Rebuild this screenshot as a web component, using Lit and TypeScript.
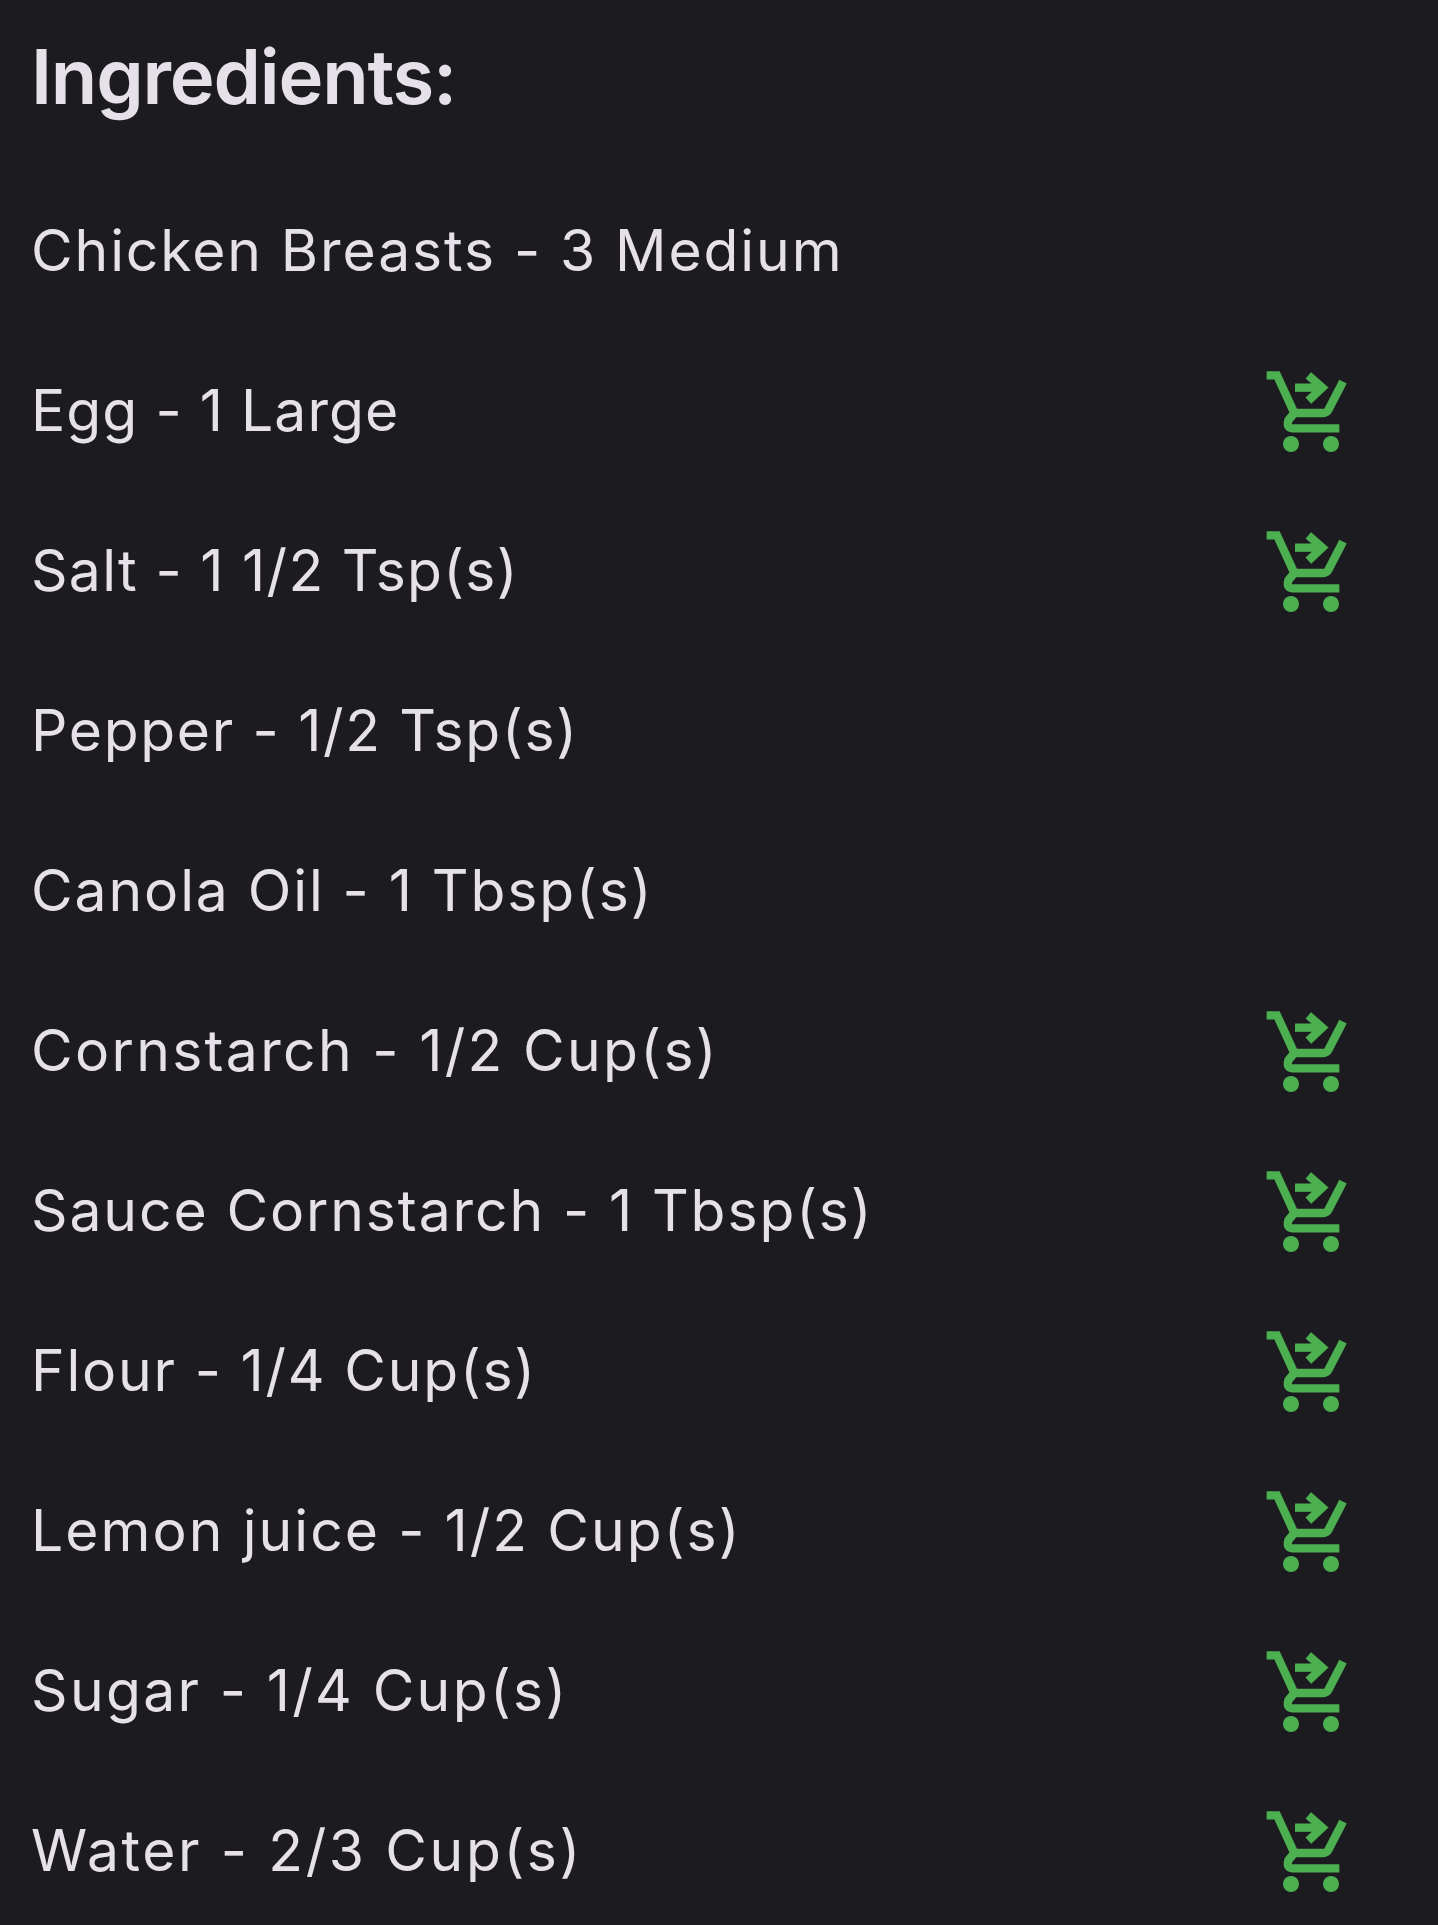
import { LitElement, html, css } from "lit";
import { customElement } from "lit/decorators.js";

const ITEMS: [string, boolean, number][] = [
  ["Chicken Breasts - 3 Medium", false, 1.9],
  ["Egg - 1 Large", true, 1.05],
  ["Salt - 1 1/2 Tsp(s)", true, 1.3],
  ["Pepper - 1/2 Tsp(s)", false, 1.67],
  ["Canola Oil - 1 Tbsp(s)", false, 1.91],
  ["Cornstarch - 1/2 Cup(s)", true, 2.33],
  ["Sauce Cornstarch - 1 Tbsp(s)", true, 1.89],
  ["Flour - 1/4 Cup(s)", true, 1.8],
  ["Lemon juice - 1/2 Cup(s)", true, 2.06],
  ["Sugar - 1/4 Cup(s)", true, 2.34],
  ["Water - 2/3 Cup(s)", true, 2.62],
];

@customElement("app-root")
export class AppRoot extends LitElement {
  static styles = css`
    :host {
      display: block;
      height: 1925px;
      overflow: hidden;
      background: #1c1b20;
      color: #e6e1e8;
      font-family: Inter, "Liberation Sans", sans-serif;
    }
    h1 {
      margin: 0;
      height: 172px;
      box-sizing: border-box;
      padding: 28px 0 0 31px;
      font-size: 76px;
      line-height: 96px;
      font-weight: 600;
      letter-spacing: -1.2px;
    }
    .row {
      height: 160px;
      display: flex;
      align-items: center;
      justify-content: space-between;
      padding: 0 48px 0 31px;
    }
    .name {
      font-size: 57px;
      font-weight: 400;
      white-space: nowrap;
      padding-bottom: 3px;
    }
    svg {
      display: block;
      width: 150px;
      height: 120px;
      flex: none;
    }
    .s {
      fill: none;
      stroke: #4caf50;
      stroke-width: 25;
      stroke-linejoin: miter;
    }
    .f {
      fill: #4caf50;
    }
  `;

  private cart() {
    return html`<svg viewBox="0 3 450 360" aria-hidden="true">
      <path class="s" d="M80 73H111L163 186H250Q260 186 265 177L309 92" />
      <path class="s" d="M163 186L145 208Q138 232 160 232H298" />
      <path class="s" d="M165 110H240" />
      <path class="s" d="M205 73L247 110L205 149" />
      <circle class="f" cx="153" cy="279" r="24" />
      <circle class="f" cx="273" cy="279" r="24" />
    </svg>`;
  }

  render() {
    return html`
      <h1>Ingredients:</h1>
      ${ITEMS.map(
        ([t, c, ls]) => html`<div class="row">
          <span class="name" style="letter-spacing:${ls}px">${t}</span>${c ? this.cart() : null}
        </div>`
      )}
    `;
  }
}
